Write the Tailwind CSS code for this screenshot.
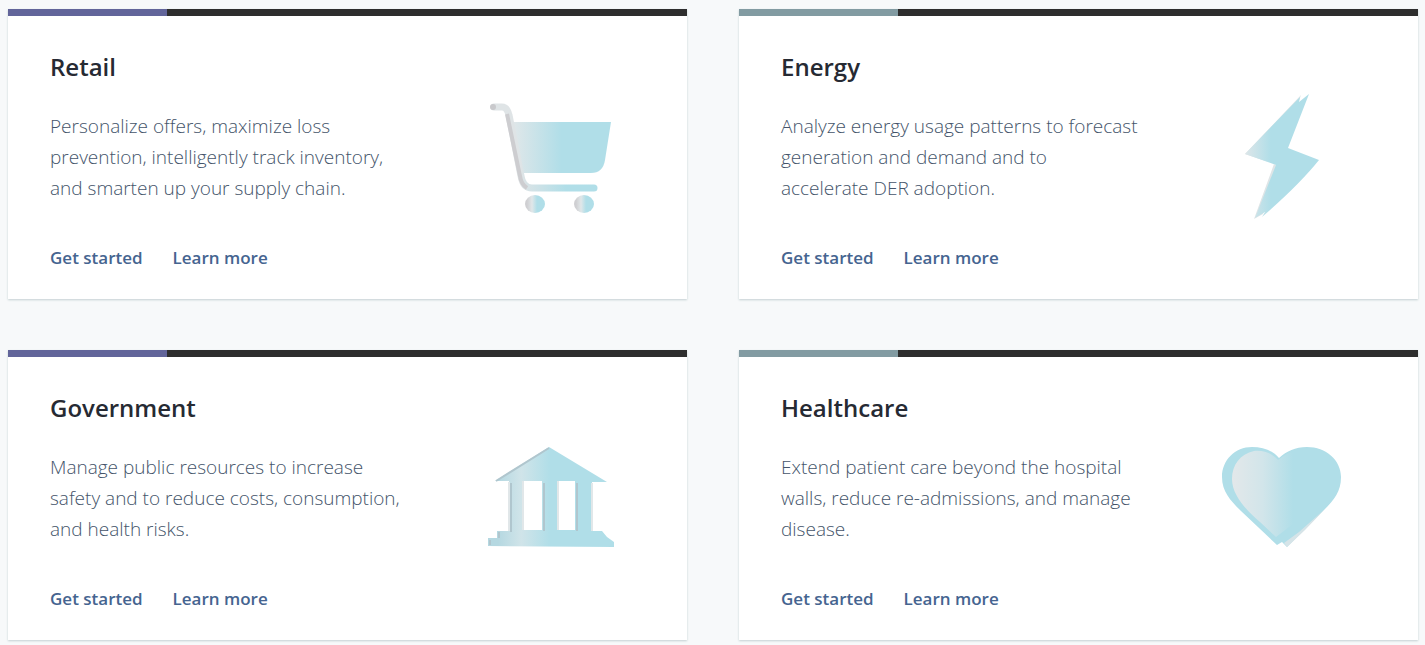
<!DOCTYPE html>
<html lang="en">
<head>
<meta charset="utf-8">
<meta name="viewport" content="width=device-width, initial-scale=1">
<title>Industry solutions</title>
<script src="https://cdn.jsdelivr.net/npm/@tailwindcss/browser@4"></script>
</head>
<body class="bg-[#f7f9fa] font-['Open_Sans',sans-serif]">
<main class="grid grid-cols-2 gap-x-[52px] gap-y-[51px] pt-[9px] pr-[7px] pb-[5px] pl-2">

  <article class="bg-white shadow-[0_1px_2px_#c3cfd2]">
    <div class="flex h-[7px] bg-[#2e2e2e]"><div class="w-[159px] bg-[#62659a]"></div></div>
    <div class="flex items-start justify-between pt-[35px] pr-[73px] pb-[29px] pl-[42px]">
      <div>
        <h2 class="text-2xl font-semibold text-[#262a33]">Retail</h2>
        <p class="mt-7 text-[19px] leading-[31px] font-light text-[#44546a]">Personalize offers, maximize loss<br>prevention, intelligently track inventory,<br>and smarten up your supply chain.</p>
        <div class="mt-[42px] flex gap-[30px] text-[17px] leading-6 font-semibold text-[#456490]"><a href="#">Get started</a><a href="#">Learn more</a></div>
      </div>
      <svg class="mt-[42px] size-32 shrink-0" viewBox="0 0 128 128" fill="none" aria-hidden="true">
        <defs>
          <linearGradient id="basket"><stop offset="0" stop-color="#e1e7e9"/><stop offset=".5" stop-color="#b0dee8"/></linearGradient>
          <linearGradient id="rail" gradientUnits="userSpaceOnUse" x1="34" y1="0" x2="80" y2="0"><stop offset="0" stop-color="#dfe4e6"/><stop offset="1" stop-color="#b0dee8"/></linearGradient>
          <linearGradient id="wheel"><stop offset=".1" stop-color="#cfcfd2"/><stop offset=".35" stop-color="#e1e7e9"/><stop offset=".6" stop-color="#b0dee8"/></linearGradient>
        </defs>
        <path d="M26 29H125L119 67Q117 80 105 80H37Z" fill="url(#basket)"/>
        <path d="M8 14H16Q21 14 23 22L35 83Q37 95 46 95H108" stroke="url(#rail)" stroke-width="7" stroke-linecap="round" stroke-linejoin="round"/>
        <path d="M21 21L34 83Q35 91 41 95" stroke="#cdcdd0" stroke-width="4"/>
        <circle cx="7" cy="14" r="3" fill="#c9c9cc"/>
        <ellipse cx="49" cy="111" rx="10" ry="9" fill="url(#wheel)"/>
        <ellipse cx="98" cy="111" rx="10" ry="9" fill="url(#wheel)"/>
      </svg>
    </div>
  </article>

  <article class="bg-white shadow-[0_1px_2px_#c3cfd2]">
    <div class="flex h-[7px] bg-[#2e2e2e]"><div class="w-[159px] bg-[#829ba2]"></div></div>
    <div class="flex items-start justify-between pt-[35px] pr-[73px] pb-[29px] pl-[42px]">
      <div>
        <h2 class="text-2xl font-semibold text-[#262a33]">Energy</h2>
        <p class="mt-7 text-[19px] leading-[31px] font-light text-[#44546a]">Analyze energy usage patterns to forecast<br>generation and demand and to<br>accelerate DER adoption.</p>
        <div class="mt-[42px] flex gap-[30px] text-[17px] leading-6 font-semibold text-[#456490]"><a href="#">Get started</a><a href="#">Learn more</a></div>
      </div>
      <svg class="mt-[42px] size-32 shrink-0" viewBox="0 0 128 128" fill="none" aria-hidden="true">
        <defs><linearGradient id="bolt"><stop offset="0" stop-color="#dde6e9"/><stop offset=".35" stop-color="#b0dee8"/></linearGradient></defs>
        <path d="M84 2L28 61L57 71L37 126L46 121L61 73L31 60L82 8Z" fill="#dfe5e7"/>
        <path d="M92 1L71 55L102 67Q82 92 45 124L48 119L38 125L59 72L28 61L83 4L82 9Z" fill="url(#bolt)"/>
      </svg>
    </div>
  </article>

  <article class="bg-white shadow-[0_1px_2px_#c3cfd2]">
    <div class="flex h-[7px] bg-[#2e2e2e]"><div class="w-[159px] bg-[#62659a]"></div></div>
    <div class="flex items-start justify-between pt-[35px] pr-[73px] pb-[29px] pl-[42px]">
      <div>
        <h2 class="text-2xl font-semibold text-[#262a33]">Government</h2>
        <p class="mt-7 text-[19px] leading-[31px] font-light text-[#44546a]">Manage public resources to increase<br>safety and to reduce costs, consumption,<br>and health risks.</p>
        <div class="mt-[42px] flex gap-[30px] text-[17px] leading-6 font-semibold text-[#456490]"><a href="#">Get started</a><a href="#">Learn more</a></div>
      </div>
      <svg class="mt-[42px] size-32 shrink-0" viewBox="0 0 128 128" fill="none" aria-hidden="true">
        <defs><linearGradient id="hall" gradientUnits="userSpaceOnUse" x1="12" y1="0" x2="128" y2="0"><stop offset="0" stop-color="#b5d8e1"/><stop offset=".2" stop-color="#d0e4e9"/><stop offset=".45" stop-color="#b0dee8"/></linearGradient></defs>
        <path fill-rule="evenodd" d="M63 13L121 48H106V97H116L121 103L128 108V113L2 112V104H11V97H23V47H9ZM38 47V96H56V47ZM73 47V96H89V47Z" fill="url(#hall)"/>
        <path d="M10 47L63 14M25 49V98M58 49V97M91 49V97M13 98V104M4 106V111" stroke="#b0c6ce" stroke-width="2"/>
        <path d="M23 48V97M37 47V96M72 47V96M106 49V97" stroke="#e1e7e9" stroke-width="2"/>
      </svg>
    </div>
  </article>

  <article class="bg-white shadow-[0_1px_2px_#c3cfd2]">
    <div class="flex h-[7px] bg-[#2e2e2e]"><div class="w-[159px] bg-[#829ba2]"></div></div>
    <div class="flex items-start justify-between pt-[35px] pr-[73px] pb-[29px] pl-[42px]">
      <div>
        <h2 class="text-2xl font-semibold text-[#262a33]">Healthcare</h2>
        <p class="mt-7 text-[19px] leading-[31px] font-light text-[#44546a]">Extend patient care beyond the hospital<br>walls, reduce re-admissions, and manage<br>disease.</p>
        <div class="mt-[42px] flex gap-[30px] text-[17px] leading-6 font-semibold text-[#456490]"><a href="#">Get started</a><a href="#">Learn more</a></div>
      </div>
      <svg class="mt-[42px] size-32 shrink-0" viewBox="0 0 128 128" fill="none" aria-hidden="true">
        <defs><linearGradient id="heart"><stop offset="0" stop-color="#e3e8ea"/><stop offset=".5" stop-color="#d2e5ea"/><stop offset="1" stop-color="#b0dee8"/></linearGradient></defs>
        <path d="M62 24C55 16 46 13 35 13C18 13 5 26 5 43C5 58 14 67 24 77L60 111L65 108L70 113L106 77C117 66 124 58 124 43C124 26 109 13 90 13C78 13 70 17 62 24Z" fill="#b0dee8"/>
        <path d="M61 26C54 18 45 16 37 17C23 20 15 31 15 45C15 61 29 76 43 88L59 103L76 90V18C70 19 66 22 61 26Z" fill="url(#heart)"/>
        <path d="M67 109L82 98L108 75L88 96L70 113Z" fill="#d6e4e8"/>
      </svg>
    </div>
  </article>
</main>
</body>
</html>
